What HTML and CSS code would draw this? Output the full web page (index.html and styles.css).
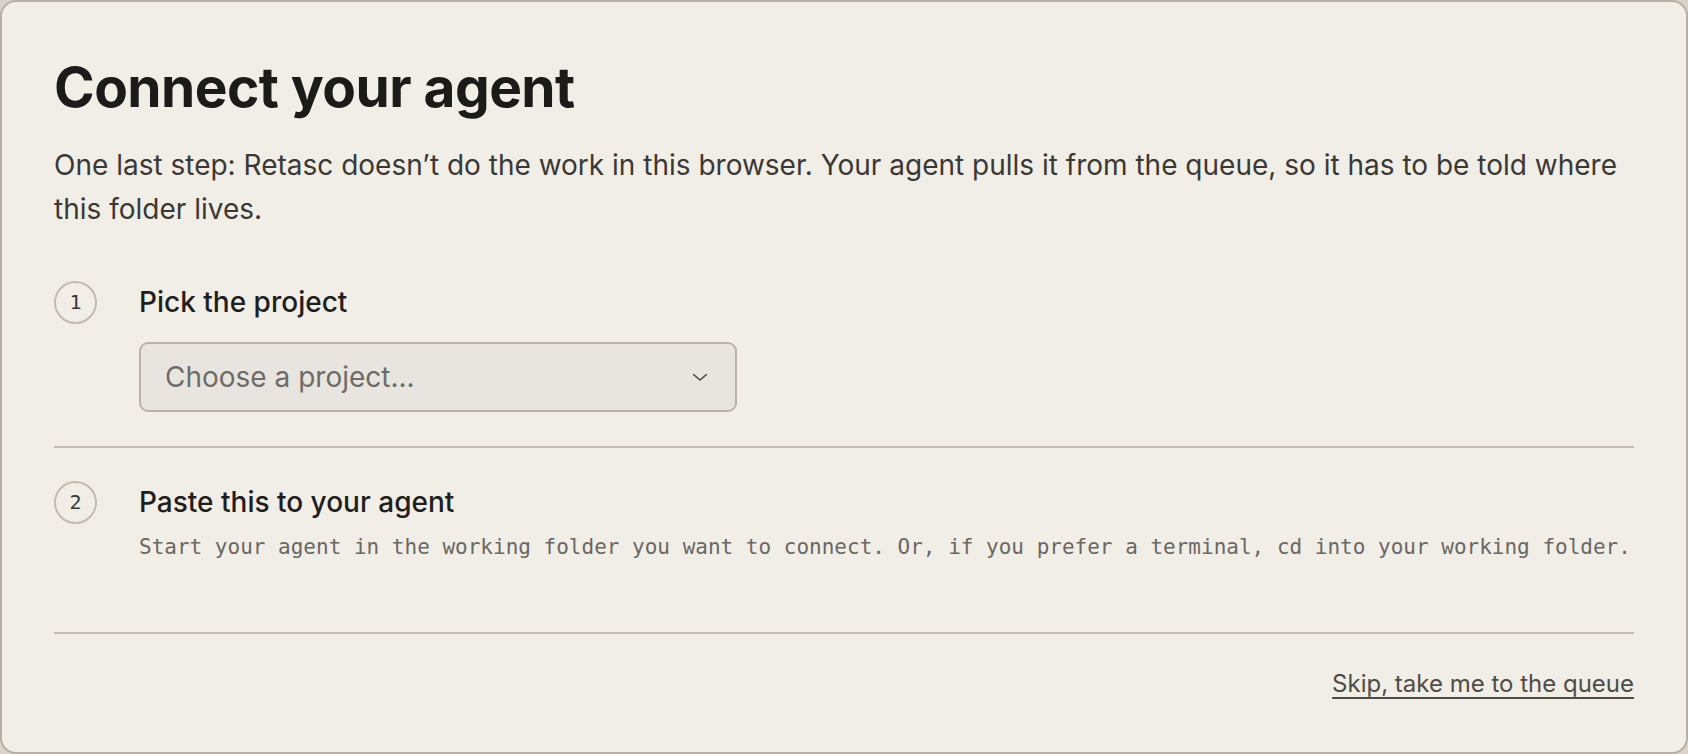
FILE: index.html
```html
<!DOCTYPE html>
<html lang="en">
<head>
<meta charset="utf-8">
<title>Connect your agent</title>
<link rel="stylesheet" href="styles.css">
</head>
<body>
<main class="card">
  <h1 class="title">Connect your agent</h1>
  <p class="lede">One last step: Retasc doesn’t do the work in this browser. Your agent pulls it from the queue, so it has to be told where this folder lives.</p>

  <section class="step step-first">
    <span class="step-num">1</span>
    <h2 class="step-title">Pick the project</h2>
    <div class="step-body">
      <div class="select" role="combobox" aria-expanded="false">
        <span class="select-placeholder">Choose a project...</span>
        <svg class="select-chevron" width="16" height="10" viewBox="0 0 16 10" aria-hidden="true">
          <path d="M1.5 2.5 L8 8 L14.5 2.5" fill="none" stroke="currentColor" stroke-width="1.6" stroke-linecap="round" stroke-linejoin="round"/>
        </svg>
      </div>
    </div>
  </section>

  <section class="step step-second">
    <span class="step-num">2</span>
    <h2 class="step-title">Paste this to your agent</h2>
    <div class="step-body">
      <p class="hint">Start your agent in the working folder you want to connect. Or, if you prefer a terminal, cd into your working folder.</p>
    </div>
  </section>

  <footer class="actions">
    <a class="skip-link" href="#">Skip, take me to the queue</a>
  </footer>
</main>
</body>
</html>
```

FILE: styles.css
```css
* {
  box-sizing: border-box;
}

html,
body {
  margin: 0;
  height: 100%;
}

body {
  background: #d9d3cb;
  font-family: Inter, "Noto Sans", sans-serif;
  color: #1d1c1a;
}

.card {
  height: 100vh;
  background: #f1eee8;
  border: 2px solid #b7afa7;
  border-radius: 16px;
  padding: 55px 52px 0;
  display: flex;
  flex-direction: column;
}

.title {
  margin: 0;
  font-size: 55px;
  line-height: 1.1;
  font-weight: 700;
  letter-spacing: -0.01em;
  color: #1c1b19;
}

.lede {
  margin: 25px 0 0;
  font-size: 28px;
  line-height: 44px;
  color: #3b3834;
}

.step {
  display: grid;
  grid-template-columns: 43px 1fr;
  column-gap: 42px;
  align-items: center;
}

.step-first {
  margin-top: 50px;
  padding-bottom: 34px;
  border-bottom: 2px solid #c3bcb4;
}

.step-second {
  padding-top: 33px;
  padding-bottom: 70px;
  border-bottom: 2px solid #c3bcb4;
}

.step-num {
  grid-column: 1;
  grid-row: 1;
  width: 43px;
  height: 43px;
  border: 2px solid #c1bab2;
  border-radius: 50%;
  display: flex;
  align-items: center;
  justify-content: center;
  font-family: "DejaVu Sans Mono", "Liberation Mono", monospace;
  font-size: 20px;
  color: #3a3733;
}

.step-title {
  grid-column: 2;
  grid-row: 1;
  margin: 0;
  font-size: 28px;
  line-height: 43px;
  font-weight: 500;
  color: #1f1e1c;
}

.step-body {
  grid-column: 2;
  grid-row: 2;
}

.step-first .step-body {
  margin-top: 18px;
}

.step-second .step-body {
  margin-top: 8px;
}

.select {
  width: 598px;
  height: 70px;
  border: 2px solid #b9b2aa;
  border-radius: 9px;
  background: #e8e5e0;
  display: flex;
  align-items: center;
  justify-content: space-between;
  padding: 0 27px 0 24px;
  cursor: pointer;
}

.select-placeholder {
  font-size: 28px;
  color: #6f6b66;
}

.select-chevron {
  color: #4a4642;
}

.hint {
  margin: 0;
  font-family: "DejaVu Sans Mono", "Liberation Mono", monospace;
  font-size: 21px;
  line-height: 30px;
  color: #6b6762;
  white-space: nowrap;
}

.actions {
  display: flex;
  justify-content: flex-end;
  padding-top: 35px;
}

.skip-link {
  font-size: 24px;
  line-height: 30px;
  color: #4f4b46;
  text-decoration: underline;
  text-decoration-thickness: 2px;
  text-underline-offset: 5px;
}
```
